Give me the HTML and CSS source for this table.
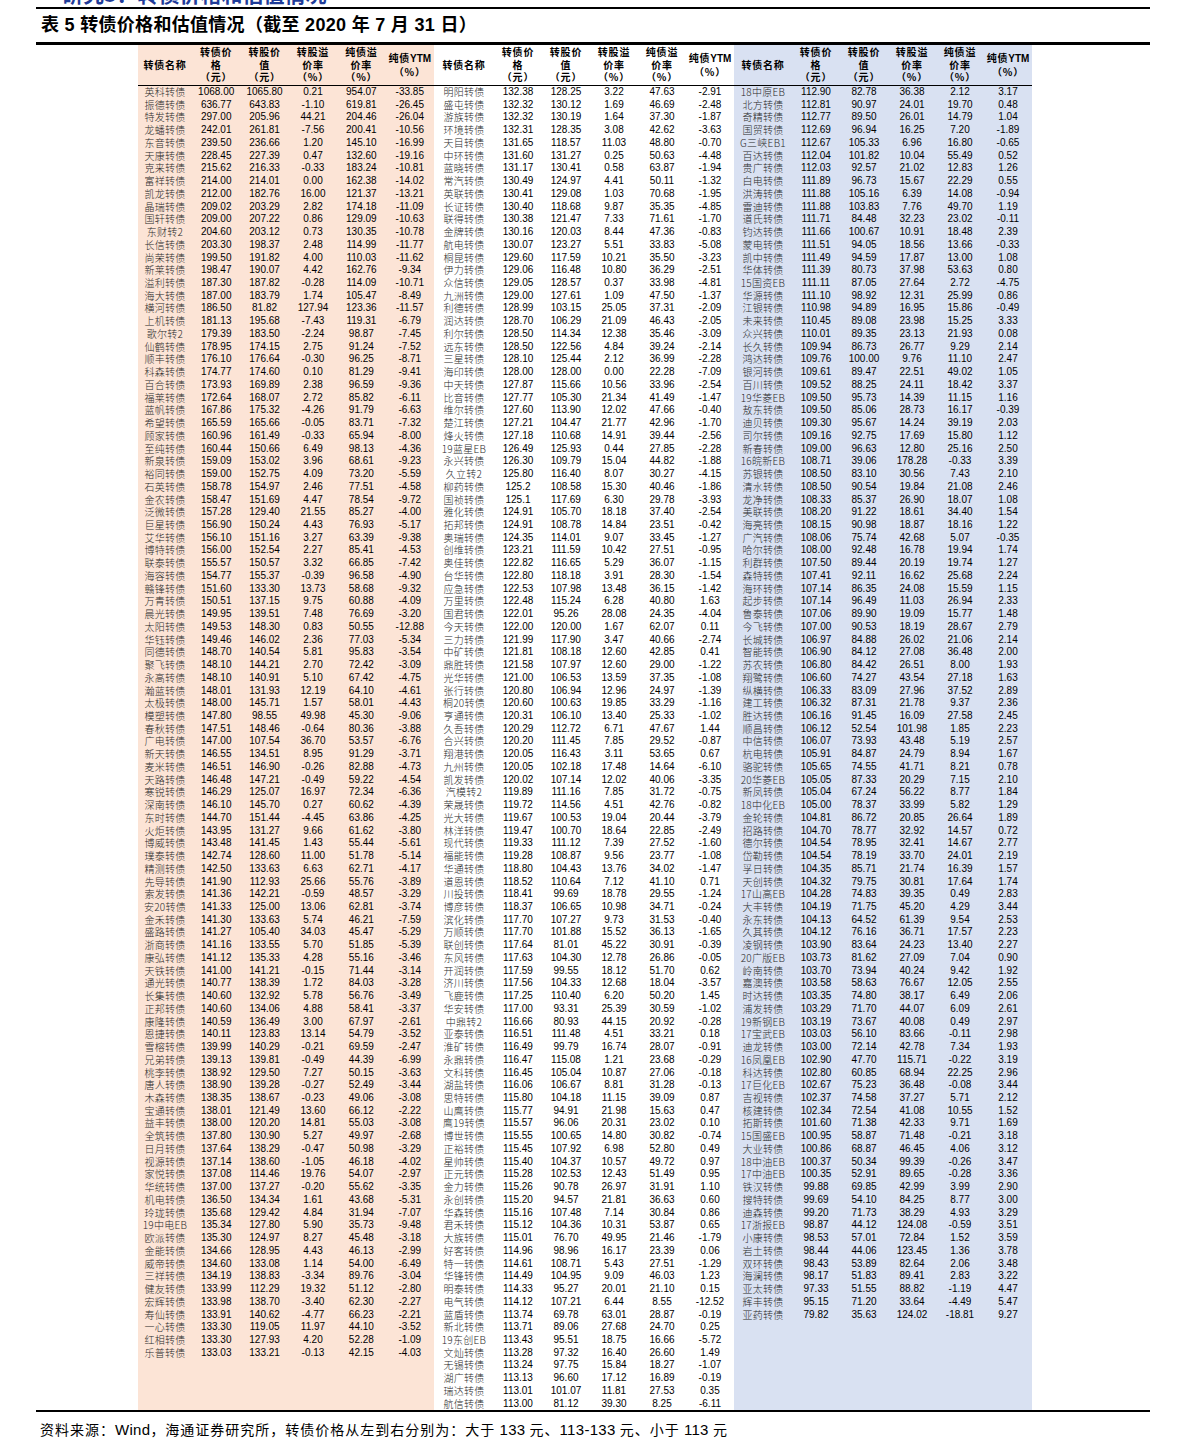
FILE: index.html
```html
<!DOCTYPE html>
<html lang="zh-CN">
<head>
<meta charset="utf-8">
<title>表 5 转债价格和估值情况</title>
<link rel="stylesheet" href="styles.css">
</head>
<body>
<div class="doc">
  <div class="running-head"><span>研究3：转债价格和估值情况</span></div>
  <div class="rule-top"></div>
  <h1 class="caption">表 5 转债价格和估值情况（截至 2020 年 7 月 31 日）</h1>
  <div class="frame">
    <div class="groups">
      <div class="grp grp-high">
        <table class="tbl tbl-a">
          <colgroup><col class="c-name"><col><col><col><col><col></colgroup>
          <thead><tr><th>转债名称</th><th>转债价<br>格<br>（元）</th><th>转股价<br>值<br>（元）</th><th>转股溢<br>价率<br>（%）</th><th>纯债溢<br>价率<br>（%）</th><th>纯债<span class="lat">YTM</span><br>（%）</th></tr></thead>
          <tbody>
<tr><td>英科转债</td><td>1068.00</td><td>1065.80</td><td>0.21</td><td>954.07</td><td>-33.85</td></tr>
<tr><td>振德转债</td><td>636.77</td><td>643.83</td><td>-1.10</td><td>619.81</td><td>-26.45</td></tr>
<tr><td>特发转债</td><td>297.00</td><td>205.96</td><td>44.21</td><td>204.46</td><td>-26.04</td></tr>
<tr><td>龙蟠转债</td><td>242.01</td><td>261.81</td><td>-7.56</td><td>200.41</td><td>-10.56</td></tr>
<tr><td>东音转债</td><td>239.50</td><td>236.66</td><td>1.20</td><td>145.10</td><td>-16.99</td></tr>
<tr><td>天康转债</td><td>228.45</td><td>227.39</td><td>0.47</td><td>132.60</td><td>-19.16</td></tr>
<tr><td>克来转债</td><td>215.62</td><td>216.33</td><td>-0.33</td><td>183.24</td><td>-10.81</td></tr>
<tr><td>富祥转债</td><td>214.00</td><td>214.01</td><td>0.00</td><td>162.38</td><td>-14.02</td></tr>
<tr><td>凯龙转债</td><td>212.00</td><td>182.76</td><td>16.00</td><td>121.37</td><td>-13.21</td></tr>
<tr><td>晶瑞转债</td><td>209.02</td><td>203.29</td><td>2.82</td><td>174.18</td><td>-11.09</td></tr>
<tr><td>国轩转债</td><td>209.00</td><td>207.22</td><td>0.86</td><td>129.09</td><td>-10.63</td></tr>
<tr><td>东财转2</td><td>204.60</td><td>203.12</td><td>0.73</td><td>130.35</td><td>-10.78</td></tr>
<tr><td>长信转债</td><td>203.30</td><td>198.37</td><td>2.48</td><td>114.99</td><td>-11.77</td></tr>
<tr><td>尚荣转债</td><td>199.50</td><td>191.82</td><td>4.00</td><td>110.03</td><td>-11.62</td></tr>
<tr><td>新莱转债</td><td>198.47</td><td>190.07</td><td>4.42</td><td>162.76</td><td>-9.34</td></tr>
<tr><td>溢利转债</td><td>187.30</td><td>187.82</td><td>-0.28</td><td>114.09</td><td>-10.71</td></tr>
<tr><td>海大转债</td><td>187.00</td><td>183.79</td><td>1.74</td><td>105.47</td><td>-8.49</td></tr>
<tr><td>横河转债</td><td>186.50</td><td>81.82</td><td>127.94</td><td>123.36</td><td>-11.57</td></tr>
<tr><td>上机转债</td><td>181.13</td><td>195.68</td><td>-7.43</td><td>119.31</td><td>-6.79</td></tr>
<tr><td>歌尔转2</td><td>179.39</td><td>183.50</td><td>-2.24</td><td>98.87</td><td>-7.45</td></tr>
<tr><td>仙鹤转债</td><td>178.95</td><td>174.15</td><td>2.75</td><td>91.24</td><td>-7.52</td></tr>
<tr><td>顺丰转债</td><td>176.10</td><td>176.64</td><td>-0.30</td><td>96.25</td><td>-8.71</td></tr>
<tr><td>科森转债</td><td>174.77</td><td>174.60</td><td>0.10</td><td>81.29</td><td>-9.41</td></tr>
<tr><td>百合转债</td><td>173.93</td><td>169.89</td><td>2.38</td><td>96.59</td><td>-9.36</td></tr>
<tr><td>福莱转债</td><td>172.64</td><td>168.07</td><td>2.72</td><td>85.82</td><td>-6.11</td></tr>
<tr><td>蓝帆转债</td><td>167.86</td><td>175.32</td><td>-4.26</td><td>91.79</td><td>-6.63</td></tr>
<tr><td>希望转债</td><td>165.59</td><td>165.66</td><td>-0.05</td><td>83.71</td><td>-7.32</td></tr>
<tr><td>顾家转债</td><td>160.96</td><td>161.49</td><td>-0.33</td><td>65.94</td><td>-8.00</td></tr>
<tr><td>至纯转债</td><td>160.44</td><td>150.66</td><td>6.49</td><td>98.13</td><td>-4.36</td></tr>
<tr><td>新泉转债</td><td>159.09</td><td>153.02</td><td>3.96</td><td>68.61</td><td>-9.23</td></tr>
<tr><td>裕同转债</td><td>159.00</td><td>152.75</td><td>4.09</td><td>73.20</td><td>-5.59</td></tr>
<tr><td>石英转债</td><td>158.78</td><td>154.97</td><td>2.46</td><td>77.51</td><td>-4.58</td></tr>
<tr><td>金农转债</td><td>158.47</td><td>151.69</td><td>4.47</td><td>78.54</td><td>-9.72</td></tr>
<tr><td>泛微转债</td><td>157.28</td><td>129.40</td><td>21.55</td><td>85.27</td><td>-4.00</td></tr>
<tr><td>巨星转债</td><td>156.90</td><td>150.24</td><td>4.43</td><td>76.93</td><td>-5.17</td></tr>
<tr><td>艾华转债</td><td>156.10</td><td>151.16</td><td>3.27</td><td>63.39</td><td>-9.38</td></tr>
<tr><td>博特转债</td><td>156.00</td><td>152.54</td><td>2.27</td><td>85.41</td><td>-4.53</td></tr>
<tr><td>联泰转债</td><td>155.57</td><td>150.57</td><td>3.32</td><td>66.85</td><td>-7.42</td></tr>
<tr><td>海容转债</td><td>154.77</td><td>155.37</td><td>-0.39</td><td>96.58</td><td>-4.90</td></tr>
<tr><td>赣锋转债</td><td>151.60</td><td>133.30</td><td>13.73</td><td>58.68</td><td>-9.32</td></tr>
<tr><td>万青转债</td><td>150.51</td><td>137.15</td><td>9.75</td><td>60.88</td><td>-4.09</td></tr>
<tr><td>晨光转债</td><td>149.95</td><td>139.51</td><td>7.48</td><td>76.69</td><td>-3.20</td></tr>
<tr><td>太阳转债</td><td>149.53</td><td>148.30</td><td>0.83</td><td>50.55</td><td>-12.88</td></tr>
<tr><td>华钰转债</td><td>149.46</td><td>146.02</td><td>2.36</td><td>77.03</td><td>-5.34</td></tr>
<tr><td>同德转债</td><td>148.70</td><td>140.54</td><td>5.81</td><td>95.83</td><td>-3.54</td></tr>
<tr><td>聚飞转债</td><td>148.10</td><td>144.21</td><td>2.70</td><td>72.42</td><td>-3.09</td></tr>
<tr><td>永高转债</td><td>148.10</td><td>140.91</td><td>5.10</td><td>67.42</td><td>-4.75</td></tr>
<tr><td>瀚蓝转债</td><td>148.01</td><td>131.93</td><td>12.19</td><td>64.10</td><td>-4.61</td></tr>
<tr><td>太极转债</td><td>148.00</td><td>145.71</td><td>1.57</td><td>58.01</td><td>-4.43</td></tr>
<tr><td>模塑转债</td><td>147.80</td><td>98.55</td><td>49.98</td><td>45.30</td><td>-9.06</td></tr>
<tr><td>春秋转债</td><td>147.51</td><td>148.46</td><td>-0.64</td><td>80.36</td><td>-3.88</td></tr>
<tr><td>广电转债</td><td>147.00</td><td>107.54</td><td>36.70</td><td>53.57</td><td>-6.76</td></tr>
<tr><td>新天转债</td><td>146.55</td><td>134.51</td><td>8.95</td><td>91.29</td><td>-3.71</td></tr>
<tr><td>麦米转债</td><td>146.51</td><td>146.90</td><td>-0.26</td><td>82.88</td><td>-4.73</td></tr>
<tr><td>天路转债</td><td>146.48</td><td>147.21</td><td>-0.49</td><td>59.22</td><td>-4.54</td></tr>
<tr><td>寒锐转债</td><td>146.29</td><td>125.07</td><td>16.97</td><td>72.34</td><td>-6.36</td></tr>
<tr><td>深南转债</td><td>146.10</td><td>145.70</td><td>0.27</td><td>60.62</td><td>-4.39</td></tr>
<tr><td>东时转债</td><td>144.70</td><td>151.44</td><td>-4.45</td><td>63.86</td><td>-4.25</td></tr>
<tr><td>火炬转债</td><td>143.95</td><td>131.27</td><td>9.66</td><td>61.62</td><td>-3.80</td></tr>
<tr><td>博威转债</td><td>143.48</td><td>141.45</td><td>1.43</td><td>55.44</td><td>-5.61</td></tr>
<tr><td>璞泰转债</td><td>142.74</td><td>128.60</td><td>11.00</td><td>51.78</td><td>-5.14</td></tr>
<tr><td>精测转债</td><td>142.50</td><td>133.63</td><td>6.63</td><td>62.71</td><td>-4.17</td></tr>
<tr><td>先导转债</td><td>141.90</td><td>112.93</td><td>25.66</td><td>55.76</td><td>-3.89</td></tr>
<tr><td>索发转债</td><td>141.36</td><td>142.21</td><td>-0.59</td><td>48.57</td><td>-3.29</td></tr>
<tr><td>安20转债</td><td>141.33</td><td>125.00</td><td>13.06</td><td>62.81</td><td>-3.74</td></tr>
<tr><td>金禾转债</td><td>141.30</td><td>133.63</td><td>5.74</td><td>46.21</td><td>-7.59</td></tr>
<tr><td>盛路转债</td><td>141.27</td><td>105.40</td><td>34.03</td><td>45.47</td><td>-5.29</td></tr>
<tr><td>浙商转债</td><td>141.16</td><td>133.55</td><td>5.70</td><td>51.85</td><td>-5.39</td></tr>
<tr><td>康弘转债</td><td>141.12</td><td>135.33</td><td>4.28</td><td>55.16</td><td>-3.46</td></tr>
<tr><td>天铁转债</td><td>141.00</td><td>141.21</td><td>-0.15</td><td>71.44</td><td>-3.14</td></tr>
<tr><td>通光转债</td><td>140.77</td><td>138.39</td><td>1.72</td><td>84.03</td><td>-3.28</td></tr>
<tr><td>长集转债</td><td>140.60</td><td>132.92</td><td>5.78</td><td>56.76</td><td>-3.49</td></tr>
<tr><td>正邦转债</td><td>140.60</td><td>134.06</td><td>4.88</td><td>58.41</td><td>-3.37</td></tr>
<tr><td>康隆转债</td><td>140.59</td><td>136.49</td><td>3.00</td><td>67.97</td><td>-2.61</td></tr>
<tr><td>恩捷转债</td><td>140.11</td><td>123.83</td><td>13.14</td><td>54.79</td><td>-3.52</td></tr>
<tr><td>雪榕转债</td><td>139.99</td><td>140.29</td><td>-0.21</td><td>69.59</td><td>-2.47</td></tr>
<tr><td>兄弟转债</td><td>139.13</td><td>139.81</td><td>-0.49</td><td>44.39</td><td>-6.99</td></tr>
<tr><td>桃李转债</td><td>138.92</td><td>129.50</td><td>7.27</td><td>50.15</td><td>-3.63</td></tr>
<tr><td>唐人转债</td><td>138.90</td><td>139.28</td><td>-0.27</td><td>52.49</td><td>-3.44</td></tr>
<tr><td>木森转债</td><td>138.35</td><td>138.67</td><td>-0.23</td><td>49.06</td><td>-3.08</td></tr>
<tr><td>宝通转债</td><td>138.01</td><td>121.49</td><td>13.60</td><td>66.12</td><td>-2.22</td></tr>
<tr><td>益丰转债</td><td>138.00</td><td>120.20</td><td>14.81</td><td>55.03</td><td>-3.08</td></tr>
<tr><td>全筑转债</td><td>137.80</td><td>130.90</td><td>5.27</td><td>49.97</td><td>-2.68</td></tr>
<tr><td>日月转债</td><td>137.64</td><td>138.29</td><td>-0.47</td><td>50.98</td><td>-3.29</td></tr>
<tr><td>视源转债</td><td>137.14</td><td>138.60</td><td>-1.05</td><td>46.18</td><td>-4.02</td></tr>
<tr><td>家悦转债</td><td>137.08</td><td>114.46</td><td>19.76</td><td>54.07</td><td>-2.97</td></tr>
<tr><td>华统转债</td><td>137.00</td><td>137.27</td><td>-0.20</td><td>55.62</td><td>-3.35</td></tr>
<tr><td>机电转债</td><td>136.50</td><td>134.34</td><td>1.61</td><td>43.68</td><td>-5.31</td></tr>
<tr><td>玲珑转债</td><td>135.68</td><td>129.42</td><td>4.84</td><td>31.94</td><td>-7.07</td></tr>
<tr><td>19中电EB</td><td>135.34</td><td>127.80</td><td>5.90</td><td>35.73</td><td>-9.48</td></tr>
<tr><td>欧派转债</td><td>135.30</td><td>124.97</td><td>8.27</td><td>45.48</td><td>-3.18</td></tr>
<tr><td>金能转债</td><td>134.66</td><td>128.95</td><td>4.43</td><td>46.13</td><td>-2.99</td></tr>
<tr><td>威帝转债</td><td>134.60</td><td>133.08</td><td>1.14</td><td>54.00</td><td>-6.49</td></tr>
<tr><td>三祥转债</td><td>134.19</td><td>138.83</td><td>-3.34</td><td>89.76</td><td>-3.04</td></tr>
<tr><td>健友转债</td><td>133.99</td><td>112.29</td><td>19.32</td><td>51.12</td><td>-2.80</td></tr>
<tr><td>宏辉转债</td><td>133.98</td><td>138.70</td><td>-3.40</td><td>62.30</td><td>-2.27</td></tr>
<tr><td>寿仙转债</td><td>133.91</td><td>140.62</td><td>-4.77</td><td>66.23</td><td>-2.21</td></tr>
<tr><td>一心转债</td><td>133.30</td><td>119.05</td><td>11.97</td><td>44.10</td><td>-3.52</td></tr>
<tr><td>红相转债</td><td>133.30</td><td>127.93</td><td>4.20</td><td>52.28</td><td>-1.09</td></tr>
<tr><td>乐普转债</td><td>133.03</td><td>133.21</td><td>-0.13</td><td>42.15</td><td>-4.03</td></tr>
          </tbody>
        </table>
      </div>
      <div class="grp grp-mid">
        <table class="tbl tbl-b">
          <colgroup><col class="c-name"><col><col><col><col><col></colgroup>
          <thead><tr><th>转债名称</th><th>转债价<br>格<br>（元）</th><th>转股价<br>值<br>（元）</th><th>转股溢<br>价率<br>（%）</th><th>纯债溢<br>价率<br>（%）</th><th>纯债<span class="lat">YTM</span><br>（%）</th></tr></thead>
          <tbody>
<tr><td>明阳转债</td><td>132.38</td><td>128.25</td><td>3.22</td><td>47.63</td><td>-2.91</td></tr>
<tr><td>盛屯转债</td><td>132.32</td><td>130.12</td><td>1.69</td><td>46.69</td><td>-2.48</td></tr>
<tr><td>游族转债</td><td>132.32</td><td>130.19</td><td>1.64</td><td>37.30</td><td>-1.87</td></tr>
<tr><td>环境转债</td><td>132.31</td><td>128.35</td><td>3.08</td><td>42.62</td><td>-3.63</td></tr>
<tr><td>天目转债</td><td>131.65</td><td>118.57</td><td>11.03</td><td>48.80</td><td>-0.70</td></tr>
<tr><td>中环转债</td><td>131.60</td><td>131.27</td><td>0.25</td><td>50.63</td><td>-4.48</td></tr>
<tr><td>蓝晓转债</td><td>131.17</td><td>130.41</td><td>0.58</td><td>63.87</td><td>-1.94</td></tr>
<tr><td>常汽转债</td><td>130.49</td><td>124.97</td><td>4.41</td><td>50.11</td><td>-1.32</td></tr>
<tr><td>英联转债</td><td>130.41</td><td>129.08</td><td>1.03</td><td>70.68</td><td>-1.95</td></tr>
<tr><td>长证转债</td><td>130.40</td><td>118.68</td><td>9.87</td><td>35.35</td><td>-4.85</td></tr>
<tr><td>联得转债</td><td>130.38</td><td>121.47</td><td>7.33</td><td>71.61</td><td>-1.70</td></tr>
<tr><td>金牌转债</td><td>130.16</td><td>120.03</td><td>8.44</td><td>47.36</td><td>-0.83</td></tr>
<tr><td>航电转债</td><td>130.07</td><td>123.27</td><td>5.51</td><td>33.83</td><td>-5.08</td></tr>
<tr><td>桐昆转债</td><td>129.60</td><td>117.59</td><td>10.21</td><td>35.50</td><td>-3.23</td></tr>
<tr><td>伊力转债</td><td>129.06</td><td>116.48</td><td>10.80</td><td>36.29</td><td>-2.51</td></tr>
<tr><td>众信转债</td><td>129.05</td><td>128.57</td><td>0.37</td><td>33.98</td><td>-4.81</td></tr>
<tr><td>九洲转债</td><td>129.00</td><td>127.61</td><td>1.09</td><td>47.50</td><td>-1.37</td></tr>
<tr><td>利德转债</td><td>128.99</td><td>103.15</td><td>25.05</td><td>37.31</td><td>-2.09</td></tr>
<tr><td>润达转债</td><td>128.70</td><td>106.29</td><td>21.09</td><td>46.43</td><td>-2.05</td></tr>
<tr><td>利尔转债</td><td>128.50</td><td>114.34</td><td>12.38</td><td>35.46</td><td>-3.09</td></tr>
<tr><td>远东转债</td><td>128.50</td><td>122.56</td><td>4.84</td><td>39.24</td><td>-2.14</td></tr>
<tr><td>三星转债</td><td>128.10</td><td>125.44</td><td>2.12</td><td>36.99</td><td>-2.28</td></tr>
<tr><td>海印转债</td><td>128.00</td><td>128.00</td><td>0.00</td><td>22.28</td><td>-7.09</td></tr>
<tr><td>中天转债</td><td>127.87</td><td>115.66</td><td>10.56</td><td>33.96</td><td>-2.54</td></tr>
<tr><td>比音转债</td><td>127.77</td><td>105.30</td><td>21.34</td><td>41.49</td><td>-1.47</td></tr>
<tr><td>维尔转债</td><td>127.60</td><td>113.90</td><td>12.02</td><td>47.66</td><td>-0.40</td></tr>
<tr><td>楚江转债</td><td>127.21</td><td>104.47</td><td>21.77</td><td>42.96</td><td>-1.70</td></tr>
<tr><td>烽火转债</td><td>127.18</td><td>110.68</td><td>14.91</td><td>39.44</td><td>-2.56</td></tr>
<tr><td>19蓝星EB</td><td>126.49</td><td>125.93</td><td>0.44</td><td>27.85</td><td>-2.28</td></tr>
<tr><td>永兴转债</td><td>126.30</td><td>109.79</td><td>15.04</td><td>44.82</td><td>-1.88</td></tr>
<tr><td>久立转2</td><td>125.80</td><td>116.40</td><td>8.07</td><td>30.27</td><td>-4.15</td></tr>
<tr><td>柳药转债</td><td>125.2</td><td>108.58</td><td>15.30</td><td>40.46</td><td>-1.86</td></tr>
<tr><td>国祯转债</td><td>125.1</td><td>117.69</td><td>6.30</td><td>29.78</td><td>-3.93</td></tr>
<tr><td>雅化转债</td><td>124.91</td><td>105.70</td><td>18.18</td><td>37.40</td><td>-2.54</td></tr>
<tr><td>拓邦转债</td><td>124.91</td><td>108.78</td><td>14.84</td><td>23.51</td><td>-0.42</td></tr>
<tr><td>奥瑞转债</td><td>124.35</td><td>114.01</td><td>9.07</td><td>33.45</td><td>-1.27</td></tr>
<tr><td>创维转债</td><td>123.21</td><td>111.59</td><td>10.42</td><td>27.51</td><td>-0.95</td></tr>
<tr><td>奥佳转债</td><td>122.82</td><td>116.65</td><td>5.29</td><td>36.07</td><td>-1.15</td></tr>
<tr><td>台华转债</td><td>122.80</td><td>118.18</td><td>3.91</td><td>28.30</td><td>-1.54</td></tr>
<tr><td>应急转债</td><td>122.53</td><td>107.98</td><td>13.48</td><td>36.15</td><td>-1.42</td></tr>
<tr><td>万里转债</td><td>122.48</td><td>115.24</td><td>6.28</td><td>40.80</td><td>1.63</td></tr>
<tr><td>国君转债</td><td>122.01</td><td>95.26</td><td>28.08</td><td>24.35</td><td>-4.04</td></tr>
<tr><td>今天转债</td><td>122.00</td><td>120.00</td><td>1.67</td><td>62.07</td><td>0.11</td></tr>
<tr><td>三力转债</td><td>121.99</td><td>117.90</td><td>3.47</td><td>40.66</td><td>-2.74</td></tr>
<tr><td>中矿转债</td><td>121.81</td><td>108.18</td><td>12.60</td><td>42.85</td><td>0.41</td></tr>
<tr><td>鼎胜转债</td><td>121.58</td><td>107.97</td><td>12.60</td><td>29.00</td><td>-1.22</td></tr>
<tr><td>光华转债</td><td>121.00</td><td>106.53</td><td>13.59</td><td>37.35</td><td>-1.08</td></tr>
<tr><td>张行转债</td><td>120.80</td><td>106.94</td><td>12.96</td><td>24.97</td><td>-1.39</td></tr>
<tr><td>桐20转债</td><td>120.60</td><td>100.63</td><td>19.85</td><td>33.29</td><td>-1.16</td></tr>
<tr><td>亨通转债</td><td>120.31</td><td>106.10</td><td>13.40</td><td>25.33</td><td>-1.02</td></tr>
<tr><td>久吾转债</td><td>120.29</td><td>112.72</td><td>6.71</td><td>47.67</td><td>1.44</td></tr>
<tr><td>合兴转债</td><td>120.20</td><td>111.45</td><td>7.85</td><td>29.52</td><td>-0.87</td></tr>
<tr><td>翔港转债</td><td>120.05</td><td>116.43</td><td>3.11</td><td>53.65</td><td>0.67</td></tr>
<tr><td>九州转债</td><td>120.05</td><td>102.18</td><td>17.48</td><td>14.64</td><td>-6.10</td></tr>
<tr><td>凯发转债</td><td>120.02</td><td>107.14</td><td>12.02</td><td>40.06</td><td>-3.35</td></tr>
<tr><td>汽模转2</td><td>119.89</td><td>111.16</td><td>7.85</td><td>31.72</td><td>-0.75</td></tr>
<tr><td>荣晟转债</td><td>119.72</td><td>114.56</td><td>4.51</td><td>42.76</td><td>-0.82</td></tr>
<tr><td>光大转债</td><td>119.67</td><td>100.53</td><td>19.04</td><td>20.44</td><td>-3.79</td></tr>
<tr><td>林洋转债</td><td>119.47</td><td>100.70</td><td>18.64</td><td>22.85</td><td>-2.49</td></tr>
<tr><td>现代转债</td><td>119.33</td><td>111.12</td><td>7.39</td><td>27.52</td><td>-1.60</td></tr>
<tr><td>福能转债</td><td>119.28</td><td>108.87</td><td>9.56</td><td>23.77</td><td>-1.08</td></tr>
<tr><td>华通转债</td><td>118.80</td><td>104.43</td><td>13.76</td><td>34.02</td><td>-1.47</td></tr>
<tr><td>道恩转债</td><td>118.52</td><td>110.64</td><td>7.12</td><td>41.10</td><td>0.71</td></tr>
<tr><td>川投转债</td><td>118.41</td><td>99.69</td><td>18.78</td><td>29.55</td><td>-1.24</td></tr>
<tr><td>博彦转债</td><td>118.37</td><td>106.65</td><td>10.98</td><td>34.71</td><td>-0.24</td></tr>
<tr><td>滨化转债</td><td>117.70</td><td>107.27</td><td>9.73</td><td>31.53</td><td>-0.40</td></tr>
<tr><td>万顺转债</td><td>117.70</td><td>101.88</td><td>15.52</td><td>36.13</td><td>-1.65</td></tr>
<tr><td>联创转债</td><td>117.64</td><td>81.01</td><td>45.22</td><td>30.91</td><td>-0.39</td></tr>
<tr><td>东风转债</td><td>117.63</td><td>104.30</td><td>12.78</td><td>26.86</td><td>-0.05</td></tr>
<tr><td>开润转债</td><td>117.59</td><td>99.55</td><td>18.12</td><td>51.70</td><td>0.62</td></tr>
<tr><td>济川转债</td><td>117.56</td><td>104.33</td><td>12.68</td><td>18.04</td><td>-3.57</td></tr>
<tr><td>飞鹿转债</td><td>117.25</td><td>110.40</td><td>6.20</td><td>50.20</td><td>1.45</td></tr>
<tr><td>华安转债</td><td>117.00</td><td>93.31</td><td>25.39</td><td>30.59</td><td>-1.02</td></tr>
<tr><td>中鼎转2</td><td>116.66</td><td>80.93</td><td>44.15</td><td>20.92</td><td>-0.28</td></tr>
<tr><td>亚泰转债</td><td>116.51</td><td>111.48</td><td>4.51</td><td>33.21</td><td>0.18</td></tr>
<tr><td>淮矿转债</td><td>116.49</td><td>99.79</td><td>16.74</td><td>28.07</td><td>-0.91</td></tr>
<tr><td>永鼎转债</td><td>116.47</td><td>115.08</td><td>1.21</td><td>23.68</td><td>-0.29</td></tr>
<tr><td>文科转债</td><td>116.45</td><td>105.04</td><td>10.87</td><td>27.06</td><td>-0.18</td></tr>
<tr><td>湖盐转债</td><td>116.06</td><td>106.67</td><td>8.81</td><td>31.28</td><td>-0.13</td></tr>
<tr><td>思特转债</td><td>115.80</td><td>104.18</td><td>11.15</td><td>39.09</td><td>0.87</td></tr>
<tr><td>山鹰转债</td><td>115.77</td><td>94.91</td><td>21.98</td><td>15.63</td><td>0.47</td></tr>
<tr><td>鹰19转债</td><td>115.57</td><td>96.06</td><td>20.31</td><td>23.02</td><td>0.10</td></tr>
<tr><td>博世转债</td><td>115.55</td><td>100.65</td><td>14.80</td><td>30.82</td><td>-0.74</td></tr>
<tr><td>正裕转债</td><td>115.45</td><td>107.92</td><td>6.98</td><td>52.80</td><td>0.49</td></tr>
<tr><td>星帅转债</td><td>115.40</td><td>104.37</td><td>10.57</td><td>49.72</td><td>0.97</td></tr>
<tr><td>正元转债</td><td>115.28</td><td>102.53</td><td>12.43</td><td>51.49</td><td>0.95</td></tr>
<tr><td>金力转债</td><td>115.26</td><td>90.78</td><td>26.97</td><td>31.91</td><td>1.10</td></tr>
<tr><td>永创转债</td><td>115.20</td><td>94.57</td><td>21.81</td><td>36.63</td><td>0.60</td></tr>
<tr><td>华森转债</td><td>115.16</td><td>107.48</td><td>7.14</td><td>30.84</td><td>0.86</td></tr>
<tr><td>君禾转债</td><td>115.12</td><td>104.36</td><td>10.31</td><td>53.87</td><td>0.65</td></tr>
<tr><td>大族转债</td><td>115.01</td><td>76.70</td><td>49.95</td><td>21.46</td><td>-1.79</td></tr>
<tr><td>好客转债</td><td>114.96</td><td>98.96</td><td>16.17</td><td>23.39</td><td>0.06</td></tr>
<tr><td>特一转债</td><td>114.61</td><td>108.71</td><td>5.43</td><td>27.51</td><td>-1.29</td></tr>
<tr><td>华锋转债</td><td>114.49</td><td>104.95</td><td>9.09</td><td>46.03</td><td>1.23</td></tr>
<tr><td>明泰转债</td><td>114.33</td><td>95.27</td><td>20.01</td><td>21.10</td><td>0.15</td></tr>
<tr><td>电气转债</td><td>114.12</td><td>107.21</td><td>6.44</td><td>8.55</td><td>-12.52</td></tr>
<tr><td>蓝盾转债</td><td>113.74</td><td>69.78</td><td>63.01</td><td>28.87</td><td>-0.19</td></tr>
<tr><td>新北转债</td><td>113.71</td><td>89.06</td><td>27.68</td><td>24.70</td><td>0.25</td></tr>
<tr><td>19东创EB</td><td>113.43</td><td>95.51</td><td>18.75</td><td>16.66</td><td>-5.72</td></tr>
<tr><td>文灿转债</td><td>113.28</td><td>97.32</td><td>16.40</td><td>26.60</td><td>1.49</td></tr>
<tr><td>无锡转债</td><td>113.24</td><td>97.75</td><td>15.84</td><td>18.27</td><td>-1.07</td></tr>
<tr><td>湖广转债</td><td>113.13</td><td>96.60</td><td>17.12</td><td>16.89</td><td>-0.19</td></tr>
<tr><td>瑞达转债</td><td>113.01</td><td>101.07</td><td>11.81</td><td>27.53</td><td>0.35</td></tr>
<tr><td>航信转债</td><td>113.00</td><td>81.12</td><td>39.30</td><td>8.25</td><td>-6.11</td></tr>
          </tbody>
        </table>
      </div>
      <div class="grp grp-low">
        <table class="tbl tbl-c">
          <colgroup><col class="c-name"><col><col><col><col><col></colgroup>
          <thead><tr><th>转债名称</th><th>转债价<br>格<br>（元）</th><th>转股价<br>值<br>（元）</th><th>转股溢<br>价率<br>（%）</th><th>纯债溢<br>价率<br>（%）</th><th>纯债<span class="lat">YTM</span><br>（%）</th></tr></thead>
          <tbody>
<tr><td>18中原EB</td><td>112.90</td><td>82.78</td><td>36.38</td><td>2.12</td><td>3.17</td></tr>
<tr><td>北方转债</td><td>112.81</td><td>90.97</td><td>24.01</td><td>19.70</td><td>0.48</td></tr>
<tr><td>奇精转债</td><td>112.77</td><td>89.50</td><td>26.01</td><td>14.79</td><td>1.04</td></tr>
<tr><td>国贸转债</td><td>112.69</td><td>96.94</td><td>16.25</td><td>7.20</td><td>-1.89</td></tr>
<tr><td>G三峡EB1</td><td>112.67</td><td>105.33</td><td>6.96</td><td>16.80</td><td>-0.65</td></tr>
<tr><td>百达转债</td><td>112.04</td><td>101.82</td><td>10.04</td><td>55.49</td><td>0.52</td></tr>
<tr><td>贵广转债</td><td>112.03</td><td>92.57</td><td>21.02</td><td>12.83</td><td>1.26</td></tr>
<tr><td>白电转债</td><td>111.89</td><td>96.73</td><td>15.67</td><td>22.29</td><td>0.55</td></tr>
<tr><td>洪涛转债</td><td>111.88</td><td>105.16</td><td>6.39</td><td>14.08</td><td>-0.94</td></tr>
<tr><td>雷迪转债</td><td>111.88</td><td>103.83</td><td>7.76</td><td>49.70</td><td>1.19</td></tr>
<tr><td>道氏转债</td><td>111.71</td><td>84.48</td><td>32.23</td><td>23.02</td><td>-0.11</td></tr>
<tr><td>钧达转债</td><td>111.66</td><td>100.67</td><td>10.91</td><td>18.48</td><td>2.39</td></tr>
<tr><td>蒙电转债</td><td>111.51</td><td>94.05</td><td>18.56</td><td>13.66</td><td>-0.33</td></tr>
<tr><td>凯中转债</td><td>111.49</td><td>94.59</td><td>17.87</td><td>13.00</td><td>1.08</td></tr>
<tr><td>华体转债</td><td>111.39</td><td>80.73</td><td>37.98</td><td>53.63</td><td>0.80</td></tr>
<tr><td>15国资EB</td><td>111.11</td><td>87.05</td><td>27.64</td><td>2.72</td><td>-4.75</td></tr>
<tr><td>华源转债</td><td>111.10</td><td>98.92</td><td>12.31</td><td>25.99</td><td>0.86</td></tr>
<tr><td>江银转债</td><td>110.98</td><td>94.89</td><td>16.95</td><td>15.86</td><td>-0.49</td></tr>
<tr><td>未来转债</td><td>110.45</td><td>89.08</td><td>23.98</td><td>15.25</td><td>3.33</td></tr>
<tr><td>众兴转债</td><td>110.01</td><td>89.35</td><td>23.13</td><td>21.93</td><td>0.08</td></tr>
<tr><td>长久转债</td><td>109.94</td><td>86.73</td><td>26.77</td><td>9.29</td><td>2.14</td></tr>
<tr><td>鸿达转债</td><td>109.76</td><td>100.00</td><td>9.76</td><td>11.10</td><td>2.47</td></tr>
<tr><td>银河转债</td><td>109.61</td><td>89.47</td><td>22.51</td><td>49.02</td><td>1.05</td></tr>
<tr><td>百川转债</td><td>109.52</td><td>88.25</td><td>24.11</td><td>18.42</td><td>3.37</td></tr>
<tr><td>19华菱EB</td><td>109.50</td><td>95.73</td><td>14.39</td><td>11.15</td><td>1.16</td></tr>
<tr><td>敖东转债</td><td>109.50</td><td>85.06</td><td>28.73</td><td>16.17</td><td>-0.39</td></tr>
<tr><td>迪贝转债</td><td>109.30</td><td>95.67</td><td>14.24</td><td>39.19</td><td>2.03</td></tr>
<tr><td>司尔转债</td><td>109.16</td><td>92.75</td><td>17.69</td><td>15.80</td><td>1.12</td></tr>
<tr><td>新春转债</td><td>109.00</td><td>96.63</td><td>12.80</td><td>25.16</td><td>2.50</td></tr>
<tr><td>16皖新EB</td><td>108.71</td><td>39.06</td><td>178.28</td><td>-0.33</td><td>3.39</td></tr>
<tr><td>苏银转债</td><td>108.50</td><td>83.10</td><td>30.56</td><td>7.43</td><td>2.10</td></tr>
<tr><td>清水转债</td><td>108.50</td><td>90.54</td><td>19.84</td><td>21.08</td><td>2.46</td></tr>
<tr><td>龙净转债</td><td>108.33</td><td>85.37</td><td>26.90</td><td>18.07</td><td>1.08</td></tr>
<tr><td>美联转债</td><td>108.20</td><td>91.22</td><td>18.61</td><td>34.40</td><td>1.54</td></tr>
<tr><td>海亮转债</td><td>108.15</td><td>90.98</td><td>18.87</td><td>18.16</td><td>1.22</td></tr>
<tr><td>广汽转债</td><td>108.06</td><td>75.74</td><td>42.68</td><td>5.07</td><td>-0.35</td></tr>
<tr><td>哈尔转债</td><td>108.00</td><td>92.48</td><td>16.78</td><td>19.94</td><td>1.74</td></tr>
<tr><td>利群转债</td><td>107.50</td><td>89.44</td><td>20.19</td><td>19.74</td><td>1.27</td></tr>
<tr><td>森特转债</td><td>107.41</td><td>92.11</td><td>16.62</td><td>25.68</td><td>2.24</td></tr>
<tr><td>海环转债</td><td>107.14</td><td>86.35</td><td>24.08</td><td>15.59</td><td>1.15</td></tr>
<tr><td>起步转债</td><td>107.14</td><td>96.49</td><td>11.03</td><td>26.94</td><td>2.33</td></tr>
<tr><td>鲁泰转债</td><td>107.06</td><td>89.90</td><td>19.09</td><td>15.77</td><td>1.48</td></tr>
<tr><td>今飞转债</td><td>107.00</td><td>90.53</td><td>18.19</td><td>28.67</td><td>2.79</td></tr>
<tr><td>长城转债</td><td>106.97</td><td>84.88</td><td>26.02</td><td>21.06</td><td>2.14</td></tr>
<tr><td>智能转债</td><td>106.90</td><td>84.12</td><td>27.08</td><td>36.48</td><td>2.00</td></tr>
<tr><td>苏农转债</td><td>106.80</td><td>84.42</td><td>26.51</td><td>8.00</td><td>1.93</td></tr>
<tr><td>翔鹭转债</td><td>106.60</td><td>74.27</td><td>43.54</td><td>27.18</td><td>1.63</td></tr>
<tr><td>纵横转债</td><td>106.33</td><td>83.09</td><td>27.96</td><td>37.52</td><td>2.89</td></tr>
<tr><td>建工转债</td><td>106.32</td><td>87.31</td><td>21.78</td><td>9.37</td><td>2.36</td></tr>
<tr><td>胜达转债</td><td>106.16</td><td>91.45</td><td>16.09</td><td>27.58</td><td>2.45</td></tr>
<tr><td>顺昌转债</td><td>106.12</td><td>52.54</td><td>101.98</td><td>1.85</td><td>2.23</td></tr>
<tr><td>中信转债</td><td>106.07</td><td>73.93</td><td>43.48</td><td>5.19</td><td>2.57</td></tr>
<tr><td>杭电转债</td><td>105.91</td><td>84.87</td><td>24.79</td><td>8.94</td><td>1.67</td></tr>
<tr><td>骆驼转债</td><td>105.65</td><td>74.55</td><td>41.71</td><td>8.21</td><td>0.78</td></tr>
<tr><td>20华菱EB</td><td>105.05</td><td>87.33</td><td>20.29</td><td>7.15</td><td>2.10</td></tr>
<tr><td>新凤转债</td><td>105.04</td><td>67.24</td><td>56.22</td><td>8.77</td><td>1.84</td></tr>
<tr><td>18中化EB</td><td>105.00</td><td>78.37</td><td>33.99</td><td>5.82</td><td>1.29</td></tr>
<tr><td>金轮转债</td><td>104.81</td><td>86.72</td><td>20.85</td><td>26.64</td><td>1.89</td></tr>
<tr><td>招路转债</td><td>104.70</td><td>78.77</td><td>32.92</td><td>14.57</td><td>0.72</td></tr>
<tr><td>德尔转债</td><td>104.54</td><td>78.95</td><td>32.41</td><td>14.67</td><td>2.77</td></tr>
<tr><td>岱勒转债</td><td>104.54</td><td>78.19</td><td>33.70</td><td>24.01</td><td>2.19</td></tr>
<tr><td>孚日转债</td><td>104.35</td><td>85.71</td><td>21.74</td><td>16.39</td><td>1.57</td></tr>
<tr><td>天创转债</td><td>104.32</td><td>79.75</td><td>30.81</td><td>17.64</td><td>1.74</td></tr>
<tr><td>17山高EB</td><td>104.28</td><td>74.83</td><td>39.35</td><td>0.49</td><td>2.83</td></tr>
<tr><td>大丰转债</td><td>104.19</td><td>71.75</td><td>45.20</td><td>4.29</td><td>3.44</td></tr>
<tr><td>永东转债</td><td>104.13</td><td>64.52</td><td>61.39</td><td>9.54</td><td>2.53</td></tr>
<tr><td>久其转债</td><td>104.12</td><td>76.16</td><td>36.71</td><td>17.57</td><td>2.23</td></tr>
<tr><td>凌钢转债</td><td>103.90</td><td>83.64</td><td>24.23</td><td>13.40</td><td>2.27</td></tr>
<tr><td>20广版EB</td><td>103.73</td><td>81.62</td><td>27.09</td><td>7.04</td><td>0.90</td></tr>
<tr><td>岭南转债</td><td>103.70</td><td>73.94</td><td>40.24</td><td>9.42</td><td>1.92</td></tr>
<tr><td>嘉澳转债</td><td>103.58</td><td>58.63</td><td>76.67</td><td>12.05</td><td>2.55</td></tr>
<tr><td>时达转债</td><td>103.35</td><td>74.80</td><td>38.17</td><td>6.49</td><td>2.06</td></tr>
<tr><td>浦发转债</td><td>103.29</td><td>71.70</td><td>44.07</td><td>6.09</td><td>2.61</td></tr>
<tr><td>19新钢EB</td><td>103.19</td><td>73.67</td><td>40.08</td><td>0.49</td><td>2.97</td></tr>
<tr><td>17宝武EB</td><td>103.03</td><td>56.10</td><td>83.66</td><td>-0.11</td><td>2.98</td></tr>
<tr><td>迪龙转债</td><td>103.00</td><td>72.14</td><td>42.78</td><td>7.34</td><td>1.93</td></tr>
<tr><td>16凤凰EB</td><td>102.90</td><td>47.70</td><td>115.71</td><td>-0.22</td><td>3.19</td></tr>
<tr><td>科达转债</td><td>102.80</td><td>60.85</td><td>68.94</td><td>22.25</td><td>2.96</td></tr>
<tr><td>17巨化EB</td><td>102.67</td><td>75.23</td><td>36.48</td><td>-0.08</td><td>3.44</td></tr>
<tr><td>吉视转债</td><td>102.37</td><td>74.58</td><td>37.27</td><td>5.71</td><td>2.12</td></tr>
<tr><td>核建转债</td><td>102.34</td><td>72.54</td><td>41.08</td><td>10.55</td><td>1.52</td></tr>
<tr><td>拓斯转债</td><td>101.60</td><td>71.38</td><td>42.33</td><td>9.71</td><td>1.69</td></tr>
<tr><td>15国盛EB</td><td>100.95</td><td>58.87</td><td>71.48</td><td>-0.21</td><td>3.18</td></tr>
<tr><td>大业转债</td><td>100.86</td><td>68.87</td><td>46.45</td><td>4.06</td><td>3.12</td></tr>
<tr><td>18中油EB</td><td>100.37</td><td>50.34</td><td>99.39</td><td>-0.26</td><td>3.47</td></tr>
<tr><td>17中油EB</td><td>100.35</td><td>52.91</td><td>89.65</td><td>-0.28</td><td>3.36</td></tr>
<tr><td>铁汉转债</td><td>99.88</td><td>69.85</td><td>42.99</td><td>3.99</td><td>2.90</td></tr>
<tr><td>搜特转债</td><td>99.69</td><td>54.10</td><td>84.25</td><td>8.77</td><td>3.00</td></tr>
<tr><td>迪森转债</td><td>99.20</td><td>71.73</td><td>38.29</td><td>4.93</td><td>3.29</td></tr>
<tr><td>17浙报EB</td><td>98.87</td><td>44.12</td><td>124.08</td><td>-0.59</td><td>3.51</td></tr>
<tr><td>小康转债</td><td>98.53</td><td>57.01</td><td>72.84</td><td>1.52</td><td>3.59</td></tr>
<tr><td>岩土转债</td><td>98.44</td><td>44.06</td><td>123.45</td><td>1.36</td><td>3.78</td></tr>
<tr><td>双环转债</td><td>98.43</td><td>53.89</td><td>82.64</td><td>2.06</td><td>3.48</td></tr>
<tr><td>海澜转债</td><td>98.17</td><td>51.83</td><td>89.41</td><td>2.83</td><td>3.22</td></tr>
<tr><td>亚太转债</td><td>97.33</td><td>51.55</td><td>88.82</td><td>-1.19</td><td>4.47</td></tr>
<tr><td>辉丰转债</td><td>95.15</td><td>71.20</td><td>33.64</td><td>-4.49</td><td>5.47</td></tr>
<tr><td>亚药转债</td><td>79.82</td><td>35.63</td><td>124.02</td><td>-18.81</td><td>9.27</td></tr>
          </tbody>
        </table>
      </div>
    </div>
  </div>
  <p class="source">资料来源：<span class="lat">Wind</span>，海通证券研究所，转债价格从左到右分别为：大于 <span class="lat">133</span> 元、<span class="lat">113-133</span> 元、小于 <span class="lat">113</span> 元</p>
</div>
</body>
</html>
```

FILE: styles.css
```css
html, body {
  margin: 0;
  padding: 0;
  background: #ffffff;
}

body {
  font-family: "Liberation Sans", "Noto Sans CJK SC", sans-serif;
  color: #000;
}

.doc {
  margin-left: 36px;
  width: 1114px;
}

.running-head {
  height: 6px;
  overflow: hidden;
}

.running-head span {
  display: block;
  margin-top: -17px;
  padding-left: 26px;
  font: bold 21px/21px "Noto Sans CJK SC", sans-serif;
  color: #1f3c99;
}

.rule-top {
  height: 2px;
  margin-top: 1px;
  background: #000;
}

.caption {
  margin: 0;
  height: 33px;
  padding-left: 5px;
  font: bold 18px/33px "Liberation Sans", "Noto Sans CJK SC", sans-serif;
  letter-spacing: 0.3px;
  color: #000;
  white-space: nowrap;
}

.frame {
  border-top: 3px solid #000;
  border-bottom: 2px solid #000;
}

.groups {
  display: flex;
  align-items: stretch;
  margin-left: 102px;
  width: 894px;
}

.grp-high {
  width: 296px;
  background: #fce4d6;
}

.grp-mid {
  width: 300px;
  background: #ffffff;
}

.grp-low {
  width: 298px;
  background: #d9e1f2;
}

.tbl {
  border-collapse: collapse;
  table-layout: fixed;
  width: 100%;
}

.tbl-a .c-name { width: 54px; }
.tbl-b .c-name { width: 60px; }
.tbl-c .c-name { width: 58px; }

.tbl th {
  height: 40px;
  padding: 0;
  border-bottom: 1px solid #000;
  vertical-align: middle;
  text-align: center;
  font: bold 10px/12.6px "Noto Sans CJK SC", sans-serif;
  letter-spacing: 0.8px;
  color: #000;
}

.tbl th .lat,
.source .lat {
  font-family: "Liberation Sans", sans-serif;
  letter-spacing: 0;
}

.tbl td {
  height: 12.73px;
  padding: 0;
  text-align: center;
  white-space: nowrap;
  font: 10px/12.73px "Liberation Sans", sans-serif;
  color: #000;
}

.tbl td:first-child {
  font: 300 10px/12.73px "Noto Sans CJK SC", sans-serif;
  letter-spacing: 0.3px;
  color: #2a2a2a;
}

.source {
  margin: 0;
  padding: 7px 0 0 4px;
  font: 14px/20px "Noto Sans CJK SC", sans-serif;
  letter-spacing: 1px;
  color: #000;
  white-space: nowrap;
}

.source .lat {
  font-size: 15px;
  letter-spacing: 0.3px;
}
```
